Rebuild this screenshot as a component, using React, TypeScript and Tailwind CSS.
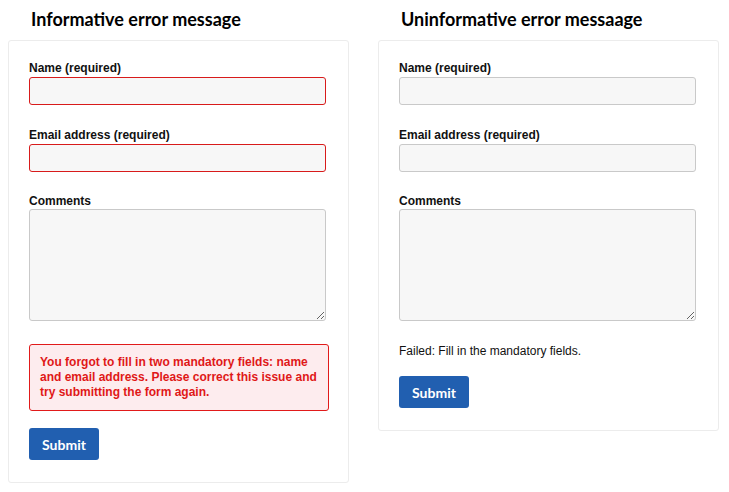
const labelCls = "block text-[12px] font-bold leading-[15px] text-[#111]";
const fieldBase = "block w-[297px] rounded-[3px] border bg-[#f7f7f7] outline-none";

const Field = ({ label, error }: { label: string; error?: boolean }) => (
  <div className="mb-[23px]">
    <label className={`${labelCls} mb-[1px]`}>{label}</label>
    <input
      type="text"
      className={`${fieldBase} h-[28px] ${error ? "border-[#d81b1b]" : "border-[#c9c9c9]"}`}
    />
  </div>
);

const Comments = () => (
  <div className="-mt-[1px]">
    <label className={labelCls}>Comments</label>
    <textarea className={`${fieldBase} h-[112px] border-[#c9c9c9] resize`} />
  </div>
);

const SubmitButton = () => (
  <button className="h-[32px] w-[70px] rounded-[3px] bg-[#215fb0] text-[14px] font-bold text-white font-['Lato',sans-serif]">
    Submit
  </button>
);

const Card = ({ title, children }: { title: string; children: React.ReactNode }) => (
  <div className="w-[341px]">
    <h2 className="pl-[23px] pt-[7px] pb-[8px] text-[18px] font-bold leading-[25px] text-black font-['Lato',sans-serif]">
      {title}
    </h2>
    <div className="rounded-[3px] border border-[#ececec] px-[20px] pt-[20px] pb-[22px]">{children}</div>
  </div>
);

export default function App() {
  return (
    <div className="flex gap-[29px] pl-[8px] bg-white min-h-[492px] font-['Liberation_Sans',Arial,sans-serif]">
      <Card title="Informative error message">
        <Field label="Name (required)" error />
        <Field label="Email address (required)" error />
        <Comments />
        <div className="mt-[23px] w-[300px] rounded-[3px] border border-[#e11a1a] bg-[#fdecee] px-[10px] pt-[10px] pb-[10px] text-[12px] font-bold leading-[15px] text-[#e01818]">
          You forgot to fill in two mandatory fields: name and email address. Please correct this issue and try submitting the form again.
        </div>
        <div className="mt-[17px]">
          <SubmitButton />
        </div>
      </Card>
      <Card title="Uninformative error messaage">
        <Field label="Name (required)" />
        <Field label="Email address (required)" />
        <Comments />
        <p className="mt-[23px] text-[12px] leading-[15px] text-[#111]">Failed: Fill in the mandatory fields.</p>
        <div className="mt-[17px]">
          <SubmitButton />
        </div>
      </Card>
    </div>
  );
}
